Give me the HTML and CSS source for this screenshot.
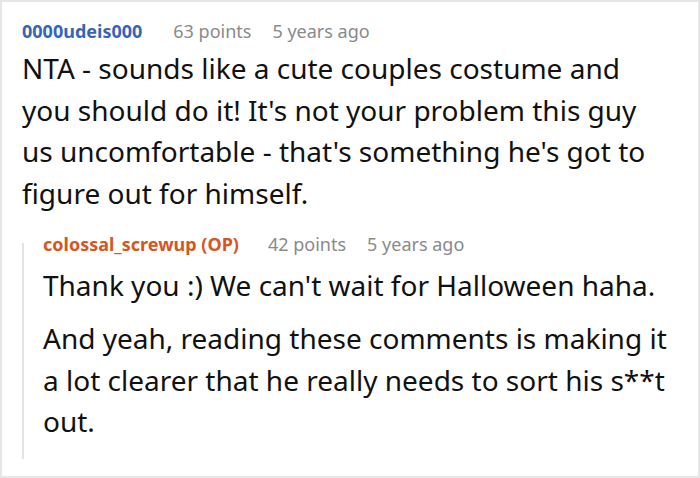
FILE: index.html
```html
<!DOCTYPE html>
<html>
<head>
<meta charset="utf-8">
<link rel="stylesheet" href="styles.css">
</head>
<body>
<div class="frame">
  <div class="comment">
    <div class="meta">
      <span class="author">0000udeis000</span>
      <span class="info">63 points</span>
      <span class="info">5 years ago</span>
    </div>
    <div class="body">
      <p>NTA - sounds like a cute couples costume and you should do it! It's not your problem this guy us uncomfortable - that's something he's got to figure out for himself.</p>
    </div>
    <div class="reply">
      <div class="meta">
        <span class="author op">colossal_screwup (OP)</span>
        <span class="info">42 points</span>
        <span class="info">5 years ago</span>
      </div>
      <div class="body">
        <p>Thank you :) We can't wait for Halloween haha.</p>
        <p>And yeah, reading these comments is making it a lot clearer that he really needs to sort his s**t out.</p>
      </div>
    </div>
  </div>
</div>
</body>
</html>
```
FILE: styles.css
```css
html, body {
  margin: 0;
  padding: 0;
  background: #fff;
}
.frame {
  width: 700px;
  height: 478px;
  box-sizing: border-box;
  border: 2px solid #e6e6e6;
  overflow: hidden;
  font-family: "Noto Sans", "Open Sans", sans-serif;
}
.comment {
  padding: 15px 26px 0 20px;
}
.meta {
  display: flex;
  font-size: 18px;
  line-height: 28px;
}
.author {
  font-weight: bold;
  color: #3566b5;
  margin-right: 31px;
}
.author.op {
  color: #d5561f;
  margin-right: 29px;
}
.info {
  color: #8a8a8a;
  margin-right: 21px;
}
.body {
  font-size: 28px;
  line-height: 41.5px;
  color: #111;
  margin-top: 3px;
}
.body p {
  margin: 0;
}
.reply {
  position: relative;
  margin-top: 16px;
  padding: 0 0 16px 21px;
}
.reply::before {
  content: "";
  position: absolute;
  left: 0;
  top: 13px;
  bottom: 0;
  width: 2px;
  background: #e3e3e3;
}
.reply .body {
  margin-top: 7px;
}
.reply .body p + p {
  margin-top: 11.5px;
}
```
